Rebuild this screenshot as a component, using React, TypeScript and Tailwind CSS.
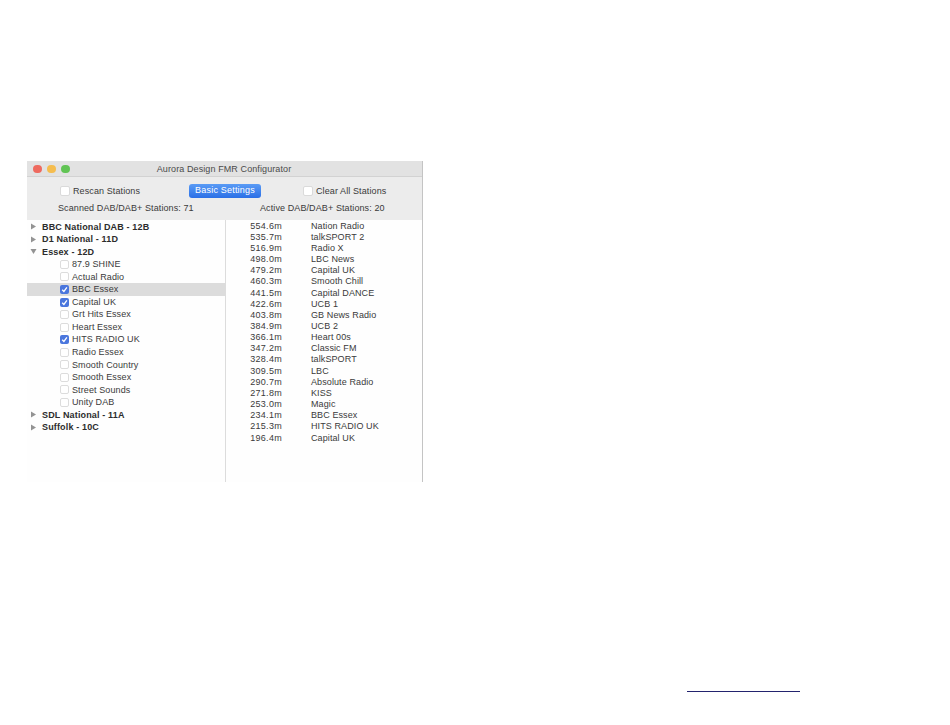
import React from "react";

const Arrow = ({ open }: { open?: boolean }) => (
  <svg width="7" height="7" viewBox="0 0 7 7" className="shrink-0">
    {open ? <path d="M0.5 1 L6.5 1 L3.5 6 Z" fill="#939393" /> : <path d="M1 0.5 L6 3.5 L1 6.5 Z" fill="#939393" />}
  </svg>
);

const Check = ({ on }: { on?: boolean }) =>
  on ? (
    <span className="w-[9px] h-[9px] rounded-[2px] bg-[#4a76dd] flex items-center justify-center shrink-0">
      <svg width="9" height="9" viewBox="0 0 9 9">
        <path d="M2.2 4.7 L3.9 6.5 L6.9 2.3" fill="none" stroke="#fff" strokeWidth="1.3" />
      </svg>
    </span>
  ) : (
    <span className="w-[9px] h-[9px] rounded-[2px] bg-white border border-[#dcdcdc] shrink-0" />
  );

const Group = ({ label, open }: { label: string; open?: boolean }) => (
  <div className="h-[12.55px] flex items-center pl-[3px] gap-[5px] font-bold text-[#2c2c2c] text-[9px] tracking-[0.15px]">
    <Arrow open={open} />
    <span className="relative top-[0.5px]">{label}</span>
  </div>
);

const Station = ({ label, on, sel }: { label: string; on?: boolean; sel?: boolean }) => (
  <div className={`h-[12.55px] flex items-center pl-[33px] gap-[3px] text-[#3a3a3a] ${sel ? "bg-[#dcdcdc]" : ""}`}>
    <Check on={on} />
    <span className="relative top-[0.5px]">{label}</span>
  </div>
);

const active: [string, string][] = [
  ["554.6m", "Nation Radio"],
  ["535.7m", "talkSPORT 2"],
  ["516.9m", "Radio X"],
  ["498.0m", "LBC News"],
  ["479.2m", "Capital UK"],
  ["460.3m", "Smooth Chill"],
  ["441.5m", "Capital DANCE"],
  ["422.6m", "UCB 1"],
  ["403.8m", "GB News Radio"],
  ["384.9m", "UCB 2"],
  ["366.1m", "Heart 00s"],
  ["347.2m", "Classic FM"],
  ["328.4m", "talkSPORT"],
  ["309.5m", "LBC"],
  ["290.7m", "Absolute Radio"],
  ["271.8m", "KISS"],
  ["253.0m", "Magic"],
  ["234.1m", "BBC Essex"],
  ["215.3m", "HITS RADIO UK"],
  ["196.4m", "Capital UK"],
];

export default function App() {
  return (
    <div className="w-[950px] h-[725px] bg-white overflow-hidden pt-[161px] pl-[27px] text-[9px] font-['Liberation_Sans',sans-serif] tracking-[0.1px] text-[#3a3a3a]">
      <div className="w-[396px] h-[321px] flex flex-col bg-[#ececec] border-r border-[#c4c4c4]">
        <div className="h-[16px] flex items-center relative bg-[#e2e2e2] border-b border-[#d2d2d2] justify-center text-[#4a4a4a]">
          <div className="absolute left-[6px] top-[3.5px] flex gap-[5.5px]">
            <span className="w-[8.5px] h-[8.5px] rounded-full bg-[#ee6a5f]" />
            <span className="w-[8.5px] h-[8.5px] rounded-full bg-[#f5bd4f]" />
            <span className="w-[8.5px] h-[8.5px] rounded-full bg-[#61c454]" />
          </div>
          <span className="relative top-[1px] -left-[0.5px]">Aurora Design FMR Configurator</span>
        </div>
        <div className="h-[43px] shrink-0 grid grid-cols-[199px_1fr]">
          <div className="pl-[33px] pt-[8px]">
            <div className="flex items-center h-[12px] gap-[3px]">
              <span className="w-[10px] h-[10px] bg-white border border-[#dadada] rounded-[2px] shrink-0" />
              <span className="relative top-[0.5px]">Rescan Stations</span>
            </div>
            <div className="mt-[5px] -ml-[2px]">Scanned DAB/DAB+ Stations: 71</div>
          </div>
          <div className="relative pt-[8px]">
            <div className="absolute -left-[37px] top-[7px] w-[72px] h-[14px] rounded-[3px] bg-gradient-to-b from-[#5a9bf5] to-[#2a6fe6] text-white flex items-center justify-center tracking-[0.2px]">
              Basic Settings
            </div>
            <div className="flex items-center h-[12px] gap-[3px] pl-[77px]">
              <span className="w-[10px] h-[10px] bg-white border border-[#dadada] rounded-[2px] shrink-0" />
              <span className="relative top-[0.5px]">Clear All Stations</span>
            </div>
            <div className="mt-[5px] pl-[34px]">Active DAB/DAB+ Stations: 20</div>
          </div>
        </div>
        <div className="flex-1 flex bg-[#fefefe] min-h-0">
          <div className="w-[199px] border-r border-[#dcdcdc] pt-[0.5px]">
            <Group label="BBC National DAB - 12B" />
            <Group label="D1 National - 11D" />
            <Group label="Essex - 12D" open />
            <Station label="87.9 SHINE" />
            <Station label="Actual Radio" />
            <Station label="BBC Essex" on sel />
            <Station label="Capital UK" on />
            <Station label="Grt Hits Essex" />
            <Station label="Heart Essex" />
            <Station label="HITS RADIO UK" on />
            <Station label="Radio Essex" />
            <Station label="Smooth Country" />
            <Station label="Smooth Essex" />
            <Station label="Street Sounds" />
            <Station label="Unity DAB" />
            <Group label="SDL National - 11A" />
            <Group label="Suffolk - 10C" />
          </div>
          <div className="flex-1 pt-[0.5px]">
            {active.map(([f, n], i) => (
              <div key={i} className="h-[11.16px] flex items-center leading-none">
                <span className="w-[56px] text-right tracking-[0.3px]">{f}</span>
                <span className="ml-[29px]">{n}</span>
              </div>
            ))}
          </div>
        </div>
      </div>
      <div className="mt-[209px] ml-[660px] w-[113px] h-px bg-[#23236e]" />
    </div>
  );
}
